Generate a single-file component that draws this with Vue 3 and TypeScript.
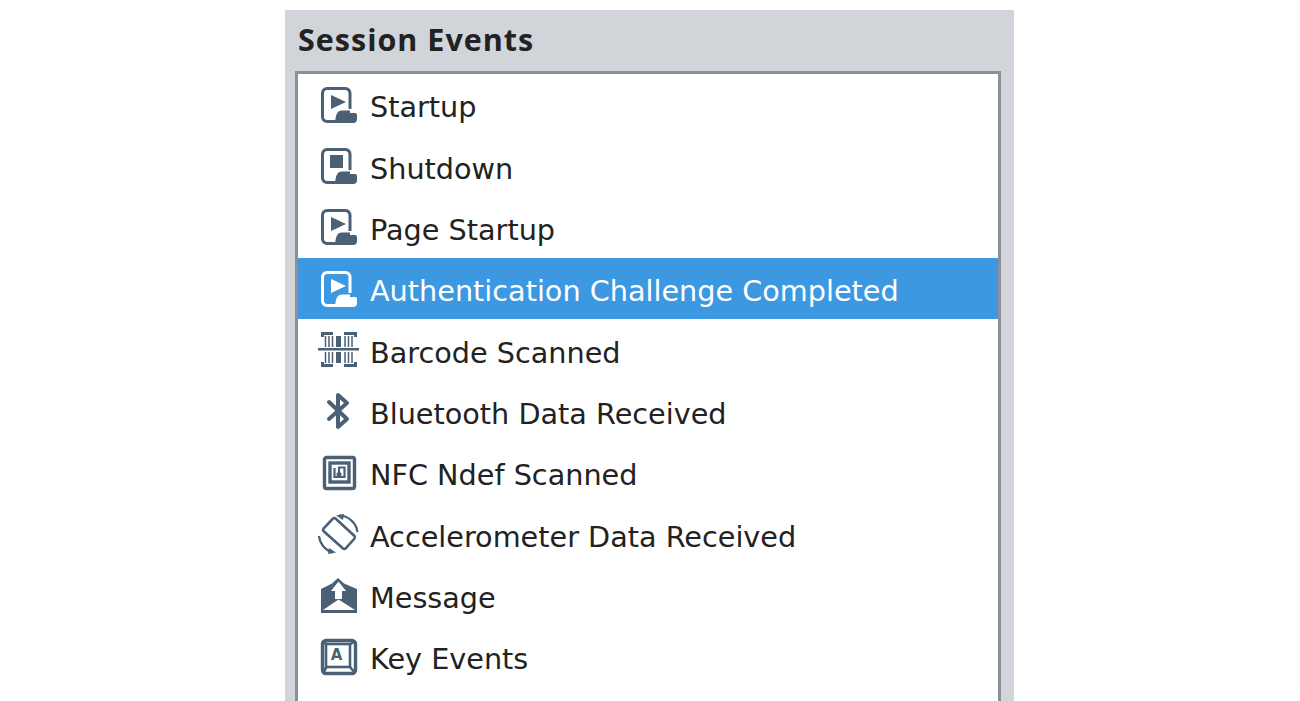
<script setup lang="ts">
interface EventRow { label: string; icon: string; selected?: boolean }
const rows: EventRow[] = [
  { label: 'Startup', icon: 'play' },
  { label: 'Shutdown', icon: 'stop' },
  { label: 'Page Startup', icon: 'play' },
  { label: 'Authentication Challenge Completed', icon: 'play', selected: true },
  { label: 'Barcode Scanned', icon: 'barcode' },
  { label: 'Bluetooth Data Received', icon: 'bluetooth' },
  { label: 'NFC Ndef Scanned', icon: 'nfc' },
  { label: 'Accelerometer Data Received', icon: 'rotate' },
  { label: 'Message', icon: 'message' },
  { label: 'Key Events', icon: 'key' },
]
</script>

<template>
  <div class="page">
    <section class="panel">
      <h2 class="title">Session Events</h2>
      <ul class="list">
        <li v-for="row in rows" :key="row.label" class="row" :class="{ selected: row.selected }">
          <svg class="icon" viewBox="0 0 40 40" width="40" height="40" aria-hidden="true">
            <template v-if="row.icon === 'play' || row.icon === 'stop'">
              <path class="outline" d="M32 24V8a4.500 4.500 0 0 0-4.500-4.500H9A4.500 4.500 0 0 0 4.500 8v24A4.500 4.500 0 0 0 9 36.500h8" />
              <path class="fill" d="M15 38c3-1 2-5 3.500-8.500Q20 25.500 24 25.500h8V28h5q2 0 2 2v4q0 4-4 4z" />
              <path v-if="row.icon === 'play'" class="fill" d="M13 10l15 7-15 7z" />
              <rect v-else class="fill" x="12" y="9" width="13" height="13" />
            </template>
            <template v-else-if="row.icon === 'barcode'">
              <path class="line3" d="M4.500 7V3.500H15M26 3.500h11.500V7M4.500 32v3.500H15M26 35.500h11.500V32" />
              <path class="thin" d="M7.500 6v11M11 6v11M14.500 6v11M27 6v11M30.500 6v11M34 6v11M7.500 22v11M11 22v11M14.500 22v11M27 22v11M30.500 22v11M34 22v11" />
              <rect class="fill" x="18" y="6" width="5" height="11" />
              <rect class="fill" x="18" y="22" width="5" height="11" />
              <rect class="fill" x="0" y="18" width="41" height="2.500" />
            </template>
            <template v-else-if="row.icon === 'bluetooth'">
              <path class="bold" d="M11 11l18 17-9 8V4l9 8-18 16" />
            </template>
            <template v-else-if="row.icon === 'nfc'">
              <rect class="heavy" x="6.500" y="4.500" width="30" height="31" rx="2" />
              <rect class="heavy" x="12" y="10" width="19" height="19" />
              <path class="thin2" d="M16.500 15v9h10V14.500H21V21" />
              <circle class="fill" cx="21" cy="21.500" r="2.500" />
            </template>
            <template v-else-if="row.icon === 'rotate'">
              <path class="thick" d="M15 4.500a2 2 0 0 1 2.500 0L36.500 22a2 2 0 0 1 0 2.500L27.500 34.500a2 2 0 0 1-2.500 0L5.500 17a2 2 0 0 1 0-2.500z" />
              <path class="thin2" d="M21 1.500A19 19 0 0 1 39.500 18M15 38.500A19 19 0 0 1 1 22" />
              <path class="fill" d="M18 1.500l8-1.500-1 6zM18 38.500l-8 1.500 1-6z" />
            </template>
            <template v-else-if="row.icon === 'message'">
              <path class="fill" d="M3 14L14 8.500 20 3l6 5.500L39 14v24H3z" />
              <path class="hole" d="M20.500 6.500L28 16h-4v8h-7v-8h-4z" />
              <path class="hole" d="M5 35L20.500 24.500 37 35z" />
            </template>
            <template v-else>
              <rect class="heavy" x="4.500" y="3.500" width="33" height="33" rx="3.500" />
              <rect class="thick" x="8" y="7" width="24" height="23" />
              <path class="thick" d="M5 4l3.500 3.500M37 4l-5 3.500M5 36l3.500-6M37 36l-5-6" />
              <text class="key-letter" x="18.500" y="22.500" text-anchor="middle">A</text>
            </template>
          </svg>
          <span class="label">{{ row.label }}</span>
        </li>
      </ul>
    </section>
  </div>
</template>

<style>
html, body { margin: 0; overflow: hidden; background: #fff; }
</style>

<style scoped>
.page {
  height: 701px;
  overflow: hidden;
  padding: 10px 0 0 285px;
  box-sizing: border-box;
}
.panel {
  width: 729px;
  height: 691px;
  background: #d1d4d8;
  box-sizing: border-box;
  padding: 0 13px 0 10px;
  overflow: hidden;
}
.title {
  margin: 0;
  height: 61px;
  padding-left: 3px;
  box-sizing: border-box;
  font: bold 30.5px/58px "Open Sans", sans-serif;
  letter-spacing: 1px;
  color: #222;
}
.list {
  list-style: none;
  margin: 0;
  padding: 0;
  background: #fff;
  border: 3px solid #8d9197;
  height: 700px;
}
.row {
  display: flex;
  align-items: center;
  gap: 12px;
  height: 61.33px;
  padding-left: 20px;
  color: #222;
  --ic: #4a6074;
}
.row.selected {
  background: #3d98e2;
  color: #fff;
  --ic: #fff;
}
.label {
  font: 28.7px/1 "DejaVu Sans", sans-serif;
  padding-top: 6px;
  white-space: nowrap;
}
.icon { flex: none; overflow: visible; }
.fill { fill: var(--ic); }
.hole { fill: #fff; }
.outline { fill: none; stroke: var(--ic); stroke-width: 3; }
.line3 { fill: none; stroke: var(--ic); stroke-width: 3; }
.thin { fill: none; stroke: var(--ic); stroke-width: 1.5; }
.thin2 { fill: none; stroke: var(--ic); stroke-width: 2.2; }
.thick { fill: none; stroke: var(--ic); stroke-width: 2.6; }
.heavy { fill: none; stroke: var(--ic); stroke-width: 3.4; }
.bold { fill: none; stroke: var(--ic); stroke-width: 4; stroke-linecap: round; stroke-linejoin: round; }
.key-letter { fill: var(--ic); font: bold 15px "DejaVu Sans", sans-serif; }
</style>
